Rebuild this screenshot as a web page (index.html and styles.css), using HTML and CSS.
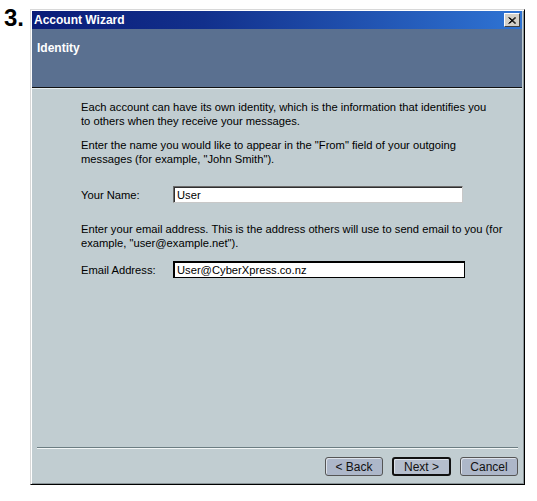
FILE: index.html
```html
<!DOCTYPE html>
<html lang="en">
<head>
    <meta charset="UTF-8">
    <title>Account Wizard</title>
    <link rel="stylesheet" href="styles.css">
</head>
<body>
<div class="page">
    <div class="step">3.</div>
    <div class="window">
        <div class="titlebar">
            <span class="title">Account Wizard</span>
            <span class="close">
                <svg width="8" height="7" viewBox="0 0 8 7">
                    <path d="M0.5 0.5 L7 6.5 M1.5 0.5 L8 6.5 M7 0.5 L0.5 6.5 M8 0.5 L1.5 6.5" stroke="#000" stroke-width="1" fill="none"/>
                </svg>
            </span>
        </div>
        <div class="header">Identity</div>
        <div class="body">
            <div class="content">
                <p>Each account can have its own identity, which is the information that identifies you<br>to others when they receive your messages.</p>
                <p>Enter the name you would like to appear in the "From" field of your outgoing<br>messages (for example, "John Smith").</p>
                <div class="field name-field">
                    <label for="name">Your Name:</label>
                    <input id="name" type="text" value="User">
                </div>
                <p class="email-text">Enter your email address. This is the address others will use to send email to you (for<br>example, "user@example.net").</p>
                <div class="field email-field">
                    <label for="email">Email Address:</label>
                    <input id="email" type="text" value="User@CyberXpress.co.nz">
                </div>
            </div>
            <div class="footer">
                <div class="separator"></div>
                <div class="buttons">
                    <button class="btn">&lt; Back</button>
                    <button class="btn default">Next &gt;</button>
                    <button class="btn">Cancel</button>
                </div>
            </div>
        </div>
    </div>
</div>
</body>
</html>
```

FILE: styles.css
```css
body {
    margin: 0;
    background: #fff;
    font-family: "Liberation Sans", Arial, sans-serif;
    font-size: 11.2px;
    color: #000;
}
.page {
    display: flex;
    padding: 9px 0 0 4px;
}
.step {
    width: 26px;
    margin-top: -3px;
    font-size: 24px;
    font-weight: bold;
    line-height: 24px;
}
.window {
    width: 495px;
    height: 476px;
    box-sizing: border-box;
    display: flex;
    flex-direction: column;
    border: 1px solid;
    border-color: #d8d8d8 #000 #000 #d8d8d8;
    box-shadow: inset 1px 1px 0 #fff, inset -1px -1px 0 #8a9498;
    background: #c1cdd1;
    padding: 1px 2px 2px 1px;
}
.titlebar {
    height: 18px;
    display: flex;
    align-items: center;
    justify-content: space-between;
    padding: 0 2px 0 2px;
    background: linear-gradient(to right, #0a1c78 0%, #12308c 35%, #2f74d4 100%);
}
.title {
    color: #fff;
    font-weight: bold;
    font-size: 12px;
}
.close {
    width: 16px;
    height: 14px;
    box-sizing: border-box;
    display: flex;
    align-items: center;
    justify-content: center;
    background: #d4d0c8;
    border: 1px solid;
    border-color: #fff #404040 #404040 #fff;
}
.header {
    height: 59px;
    box-sizing: border-box;
    padding: 12px 0 0 5px;
    background: #5a7090;
    color: #fff;
    font-weight: bold;
    font-size: 12px;
    border-bottom: 1px solid #111;
    box-shadow: 0 1px 0 #e6eef0;
}
.body {
    flex: 1;
    display: flex;
    flex-direction: column;
    padding-top: 1px;
}
.content {
    flex: 1;
    padding: 11px 4px 0 49px;
    white-space: nowrap;
}
.content p {
    margin: 0 0 10px;
    line-height: 14px;
}
.field {
    display: flex;
    align-items: center;
    margin-top: 20px;
}
.field label {
    width: 92px;
}
.field input {
    height: 17px;
    box-sizing: border-box;
    padding: 0 3px;
    font: inherit;
    background: #fff;
    border: 1px solid;
    border-color: #6a6a6a #c8c8c8 #c8c8c8 #6a6a6a;
    box-shadow: inset 1px 1px 0 #303030;
    outline: none;
}
.name-field input {
    width: 290px;
}
.email-text {
    margin-top: 19px !important;
}
.email-field {
    margin-top: 11px;
}
.email-field input {
    width: 292px;
    border-color: #000;
    box-shadow: inset 1px 1px 0 #000;
}
.footer {
    padding: 0 4px 6px 5px;
}
.separator {
    height: 1px;
    background: #6c7d82;
    border-bottom: 1px solid #f2f6f6;
}
.buttons {
    display: flex;
    justify-content: flex-end;
    gap: 9px;
    margin-top: 8px;
}
.btn {
    width: 58px;
    height: 19px;
    padding: 0;
    font: inherit;
    font-size: 12px;
    color: #111;
    background: #adb7c9;
    border: 1px solid #555;
    border-radius: 3px;
    box-shadow: inset 1px 1px 0 #dde2ea;
}
.btn.default {
    width: 59px;
    border: 2px solid #111;
    background: #b5becd;
}
```
